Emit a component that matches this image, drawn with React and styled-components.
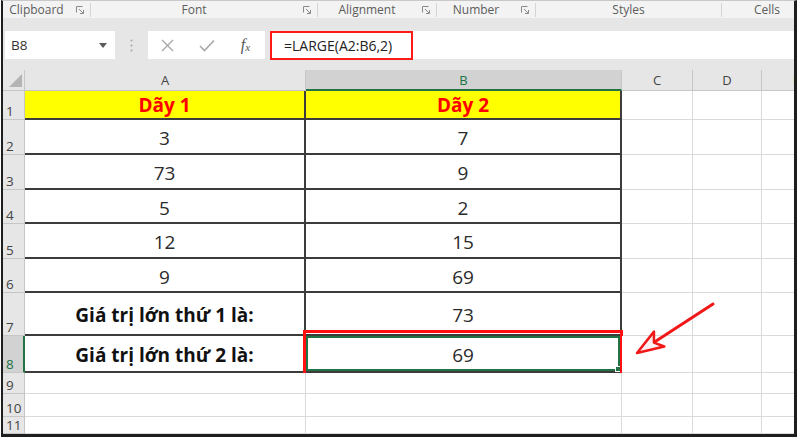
import React from 'react';
import styled, { createGlobalStyle } from 'styled-components';

const Global = createGlobalStyle`
  html, body { margin: 0; padding: 0; background: #ffffff; }
  * { box-sizing: border-box; }
`

const Page = styled.div`
width: 800px;
height: 439px;
overflow: hidden;
background: #ffffff;
font-family: "Open Sans", "Liberation Sans", sans-serif;
`

const Frame = styled.div`
margin-left: 1px;
width: 796px;
height: 437px;
display: flex;
flex-direction: column;
background: #e6e6e6;
border-top: 1px solid #c8c8c8;
border-left: 2px solid #1e1e1e;
border-right: 3px solid #1e1e1e;
border-bottom: 3px solid #1e1e1e;
`

const Ribbon = styled.div`
flex-shrink: 0;
height: 17px;
display: flex;
align-items: center;
padding-top: 1px;
background: #f3f3f3;
`

const Group = styled.div`
width: ${p => p.w}px;
height: 14px;
display: flex;
align-items: center;
border-right: ${p => (p.last ? 'none' : '1px solid #d4d4d4')};
`

const GroupLabel = styled.div`
flex: 1;
text-align: center;
padding-left: ${p => p.pad || 0}px;
font-size: 12px;
line-height: 14px;
color: #5c5c5c;
white-space: nowrap;
`

const Launcher = styled.div`
width: 20px;
display: flex;
justify-content: center;
`

const FormulaArea = styled.div`
flex-shrink: 0;
display: flex;
height: 52px;
padding: 13px 0 11px 2px;
`

const NameBox = styled.div`
width: 110px;
background: #ffffff;
display: flex;
align-items: center;
padding: 0 8px 0 6px;
font-size: 13.5px;
color: #333;
span { flex: 1; }
`

const Dots = styled.div`
width: 33px;
display: flex;
align-items: center;
justify-content: center;
`

const FuncBox = styled.div`
width: 117px;
background: #ffffff;
display: grid;
grid-template-columns: repeat(3, 1fr);
align-items: center;
justify-items: center;
`

const Fx = styled.div`
font-family: "Liberation Serif", serif;
font-style: italic;
color: #555;
font-size: 16px;
line-height: 1;
sub { font-size: 11px; vertical-align: -1px; }
`

const FormulaInput = styled.div`
flex: 1;
margin-left: 5px;
background: #ffffff;
display: flex;
`

const Highlight = styled.div`
width: 143px;
height: 29px;
border: 2px solid #ff1a1a;
padding-left: 12px;
display: flex;
align-items: center;
font-size: 14px;
color: #222;
white-space: nowrap;
`

const Sheet = styled.div`
position: relative;
flex: 1;
min-height: 0;
overflow: hidden;
display: grid;
grid-template-columns: 22px 281px 316px 71px 69px 70px;
grid-template-rows: 21px 29px 35px 35px 34px 35px 34px 43px 37px 21px 23px 17px;
background: #ffffff;
`

const Corner = styled.div`
background: #e6e6e6;
border-right: 1px solid #c6c6c6;
border-bottom: 1px solid #c6c6c6;
display: flex;
align-items: flex-end;
justify-content: flex-end;
padding: 0 2px 3px 0;
`

const ColHead = styled.div`
background: ${p => (p.active ? '#d2d2d2' : '#e6e6e6')};
color: ${p => (p.active ? '#217346' : '#444')};
border-right: 1px solid #c6c6c6;
border-bottom: ${p => (p.active ? '2px solid #217346' : '1px solid #c6c6c6')};
display: flex;
align-items: center;
justify-content: center;
font-size: 13px;
`

const RowHead = styled.div`
background: ${p => (p.active ? '#d2d2d2' : '#e6e6e6')};
color: ${p => (p.active ? '#217346' : '#444')};
border-right: ${p => (p.active ? '2px solid #217346' : '1px solid #c6c6c6')};
border-bottom: 1px solid #c6c6c6;
display: flex;
align-items: flex-end;
padding: 0 0 0 3px;
font-size: 13.5px;
line-height: 16px;
`

const Cell = styled.div`
position: relative;
display: flex;
align-items: center;
justify-content: center;
padding-top: ${p => (p.head ? 0 : 3)}px;
background: ${p => (p.fill ? '#ffff00' : '#ffffff')};
border-right: ${p => (p.boxed ? '2px solid #3c3c3c' : '1px solid #dadada')};
border-bottom: ${p => (p.boxed ? '2px solid #3c3c3c' : '1px solid #dadada')};
box-shadow: ${p => (p.selected ? 'inset 0 0 0 2px #217346' : 'none')};
font-size: 19px;
font-weight: ${p => (p.bold ? 700 : 400)};
color: ${p => (p.red ? '#ff0000' : p.bold ? '#111' : '#2b2b2b')};
white-space: nowrap;
`

const FillHandle = styled.div`
position: absolute;
right: -1px;
bottom: -1px;
width: 6px;
height: 6px;
background: #217346;
border: 1px solid #ffffff;
`

const Annotation = styled.div`
position: absolute;
left: -3px;
right: -3px;
top: -6px;
bottom: -6px;
border: 3px solid #ff1010;
pointer-events: none;
`

const ArrowLayer = styled.svg`
position: absolute;
left: 0;
top: 0;
width: 791px;
height: 364px;
pointer-events: none;
`

const LauncherIcon = () => (
  <svg width="8" height="8" viewBox="0 0 8 8">
    <path d="M0.5 6.5V0.5H6.5" fill="none" stroke="#8a8a8a" strokeWidth="1" />
    <path d="M3 3L7 7M7.5 4V7.5H4" fill="none" stroke="#8a8a8a" strokeWidth="1" />
  </svg>
)

const groups = [
  { name: 'Clipboard', w: 88, launcher: true },
  { name: 'Font', w: 227, launcher: true },
  { name: 'Alignment', w: 119, launcher: true },
  { name: 'Number', w: 99, launcher: true },
  { name: 'Styles', w: 186 },
  { name: 'Cells', w: 72, last: true, pad: 18 },
]

const rows = [
  { a: 'Dãy 1', b: 'Dãy 2', head: true },
  { a: '3', b: '7' },
  { a: '73', b: '9' },
  { a: '5', b: '2' },
  { a: '12', b: '15' },
  { a: '9', b: '69' },
  { a: 'Giá trị lớn thứ 1 là:', b: '73', label: true },
  { a: 'Giá trị lớn thứ 2 là:', b: '69', label: true, selected: true },
]

function App() {
  return (
    <Page>
      <Global />
      <Frame>
        <Ribbon>
          {groups.map(g => (
            <Group key={g.name} w={g.w} last={g.last}>
              <GroupLabel pad={g.pad}>{g.name}</GroupLabel>
              {g.launcher && <Launcher><LauncherIcon /></Launcher>}
            </Group>
          ))}
        </Ribbon>

        <FormulaArea>
          <NameBox>
            <span>B8</span>
            <svg width="8" height="5" viewBox="0 0 8 5">
              <path d="M0 0H8L4 5Z" fill="#5a5a5a" />
            </svg>
          </NameBox>
          <Dots>
            <svg width="3" height="13" viewBox="0 0 3 13">
              <circle cx="1.5" cy="1.5" r="1" fill="#a6a6a6" />
              <circle cx="1.5" cy="6.5" r="1" fill="#a6a6a6" />
              <circle cx="1.5" cy="11.5" r="1" fill="#a6a6a6" />
            </svg>
          </Dots>
          <FuncBox>
            <svg width="13" height="13" viewBox="0 0 13 13">
              <path d="M1 1L12 12M12 1L1 12" stroke="#a8a8a8" strokeWidth="1.4" />
            </svg>
            <svg width="16" height="13" viewBox="0 0 16 13">
              <path d="M1 7L5.5 11.5L15 1.5" fill="none" stroke="#a8a8a8" strokeWidth="1.6" />
            </svg>
            <Fx>f<sub>x</sub></Fx>
          </FuncBox>
          <FormulaInput>
            <Highlight>=LARGE(A2:B6,2)</Highlight>
          </FormulaInput>
        </FormulaArea>

        <Sheet>
          <Corner>
            <svg width="13" height="13" viewBox="0 0 13 13">
              <path d="M13 0V13H0Z" fill="#b4b4b4" />
            </svg>
          </Corner>
          <ColHead>A</ColHead>
          <ColHead active>B</ColHead>
          <ColHead>C</ColHead>
          <ColHead>D</ColHead>
          <ColHead>E</ColHead>

          {rows.map((r, i) => (
            <React.Fragment key={i}>
              <RowHead active={r.selected}>{i + 1}</RowHead>
              <Cell boxed fill={r.head} head={r.head} red={r.head} bold={r.head || r.label}>{r.a}</Cell>
              <Cell boxed fill={r.head} head={r.head} red={r.head} bold={r.head} selected={r.selected}>
                {r.b}
                {r.selected && <FillHandle />}
                {r.selected && <Annotation />}
              </Cell>
              <Cell />
              <Cell />
              <Cell />
            </React.Fragment>
          ))}

          {[9, 10, 11].map(n => (
            <React.Fragment key={n}>
              <RowHead>{n}</RowHead>
              <Cell />
              <Cell />
              <Cell />
              <Cell />
              <Cell />
            </React.Fragment>
          ))}

          <ArrowLayer viewBox="0 0 791 364">
            <line x1="710" y1="234" x2="650" y2="273" stroke="#f01818" strokeWidth="3" strokeLinecap="round" />
            <path d="M634 283L651 261.6L650.9 272.6L661.3 276.5Z" fill="#fff2f2" stroke="#f01818" strokeWidth="2.5" strokeLinejoin="round" />
          </ArrowLayer>
        </Sheet>
      </Frame>
    </Page>
  )
}

export default App
